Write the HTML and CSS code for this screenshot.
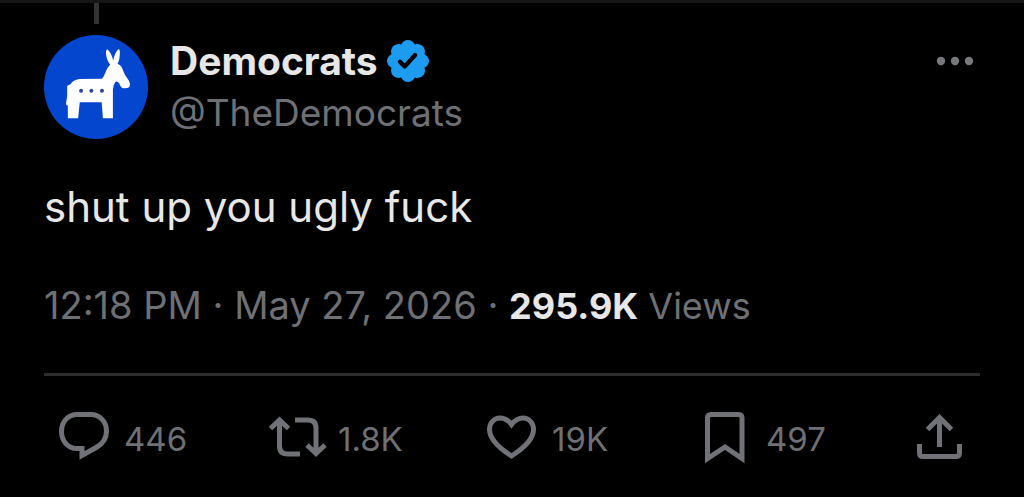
FILE: index.html
```html
<!DOCTYPE html>
<html lang="en">
<head>
<meta charset="utf-8">
<meta name="viewport" content="width=device-width, initial-scale=1">
<title>Post</title>
<link rel="stylesheet" href="styles.css">
</head>
<body>
<article class="post">
  <div class="thread"><span class="thread-line"></span></div>
  <header class="author">
    <svg class="avatar" viewBox="12 14 314 314" role="img" aria-label="Democrats avatar">
      <circle cx="169" cy="171" r="157" fill="#0546cf"/>
      <path fill="#fff" d="M84 265 L84 227 Q77 227 79 217 L82 199 L82 167 L92 163 Q100 150 118 147 L187 146 Q194 139 197 128 Q202 113 212 103 Q202 92 199 71 Q199 57 204 58 Q217 71 221 91 Q225 69 236 57 Q242 55 241 72 Q240 91 234 101 Q246 105 250 120 Q255 136 268 151 Q274 161 270 171 Q261 177 248 174 Q242 170 239 160 Q234 153 228 155 Q221 164 220 178 L220 265 L190 265 L186 217 L120 217 L115 265 Z"/>
      <g fill="#31439a"><circle cx="124" cy="182" r="6"/><circle cx="155" cy="182" r="6"/><circle cx="187" cy="182" r="6"/></g>
    </svg>
    <div class="names">
      <div class="name-row">
        <span class="name">Democrats</span>
        <svg class="badge" viewBox="1.6 1.6 18.8 18.8" role="img" aria-label="Verified">
          <path fill="#1d9bf0" d="M20.396 11c-.018-.646-.215-1.275-.57-1.816-.354-.54-.852-.972-1.438-1.246.223-.607.27-1.264.14-1.897-.131-.634-.437-1.218-.882-1.687-.47-.445-1.053-.75-1.687-.882-.633-.13-1.29-.083-1.897.14-.273-.587-.704-1.086-1.245-1.44S11.647 1.62 11 1.604c-.646.017-1.273.213-1.813.568s-.969.854-1.24 1.44c-.608-.223-1.267-.272-1.902-.14-.635.13-1.22.436-1.69.882-.445.47-.749 1.055-.878 1.688-.13.633-.08 1.29.144 1.896-.587.274-1.087.705-1.443 1.245-.356.54-.555 1.17-.574 1.817.02.647.218 1.276.574 1.817.356.54.856.972 1.443 1.245-.224.606-.274 1.263-.144 1.896.13.634.433 1.218.877 1.688.47.443 1.054.747 1.687.878.633.132 1.29.084 1.897-.136.274.586.705 1.084 1.246 1.439.54.354 1.17.551 1.816.569.647-.016 1.276-.213 1.817-.567s.972-.854 1.245-1.44c.604.239 1.266.296 1.903.164.636-.132 1.22-.447 1.68-.907.46-.46.776-1.044.908-1.681s.075-1.299-.165-1.903c.586-.274 1.084-.705 1.439-1.246.354-.54.551-1.17.569-1.816z"/>
          <path fill="none" stroke="#000" stroke-width="1.9" stroke-linecap="round" stroke-linejoin="round" d="M7.400 11.300 9.500 13.500 14.200 8.300"/>
        </svg>
      </div>
      <a class="handle" href="#profile">@TheDemocrats</a>
    </div>
    <button class="more" type="button" aria-label="More">
      <svg class="dots" viewBox="0 0 38 10"><circle cx="5" cy="5" r="4.2"/><circle cx="19" cy="5" r="4.2"/><circle cx="33" cy="5" r="4.2"/></svg>
    </button>
  </header>
  <p class="text">shut up you ugly fuck</p>
  <p class="meta"><time datetime="2026-05-27T12:18">12:18 PM · May 27, 2026</time> · <span class="views"><strong class="views-count">295.9K</strong> Views</span></p>
  <footer class="actions">
    <button class="action" type="button" aria-label="Reply, 446">
      <svg class="icon" viewBox="56 410 56 56"><path d="M77 414.5H91C100 414.5 106.500 422 106.500 431C106.500 438 103 443.500 97 447L82 455.500V448.500H77C68 448.500 61.500 441 61.500 431.500C61.500 422 68 414.500 77 414.500Z"/></svg>
      <span class="count">446</span>
    </button>
    <button class="action" type="button" aria-label="Repost, 1.8K">
      <svg class="icon" viewBox="270 410 56 56"><path d="M270.500 428.500 279.500 420 288.500 428.500M279.500 421V446Q279.500 454 287.500 454H300M295 420H308Q316 420 316 428V453M307 445 316 453.500 325 445"/></svg>
      <span class="count">1.8K</span>
    </button>
    <button class="action" type="button" aria-label="Like, 19K">
      <svg class="icon" viewBox="484 410 56 56"><path d="M511.500 456C499 448 489.500 439 489.500 429.500C489.500 422.500 494.500 418 500 418C505 418 508.500 420.500 511.500 424.500C514.500 420.500 518 418 523 418C528.500 418 533.500 422.500 533.500 429.500C533.500 439 524 448 511.500 456Z"/></svg>
      <span class="count">19K</span>
    </button>
    <button class="action" type="button" aria-label="Bookmark, 497">
      <svg class="icon" viewBox="698 410 56 56"><path d="M707.500 458.500V418Q707.500 414.500 711 414.500H738.500Q742 414.500 742 418V458.500L725 447Z"/></svg>
      <span class="count">497</span>
    </button>
    <button class="action" type="button" aria-label="Share">
      <svg class="icon" viewBox="912 410 56 56"><path d="M927.500 429.500 939.500 417.500 951.500 429.500M939.500 418V447M919.500 444V453Q919.500 456.500 923 456.500H956Q959.500 456.500 959.500 453V444"/></svg>
    </button>
  </footer>
</article>
</body>
</html>
```
FILE: styles.css
```css
* { box-sizing: border-box; }

body {
  margin: 0;
  background: #000;
  color: #e7e7e8;
  font-family: Inter, "Liberation Sans", sans-serif;
}

button {
  padding: 0;
  border: 0;
  background: none;
  color: inherit;
  font: inherit;
  cursor: pointer;
}

.post {
  padding: 0 44px 24px;
  border-top: 3px solid #161616;
}

.thread {
  display: flex;
  justify-content: center;
  width: 104px;
  height: 32px;
}

.thread-line {
  width: 5px;
  height: 21px;
  background: #333334;
}

.author {
  display: flex;
  align-items: flex-start;
}

.avatar {
  flex: none;
  width: 104px;
  height: 104px;
  margin-right: 22px;
}

.names {
  flex: 1;
  min-width: 0;
  line-height: 52px;
}

.name-row {
  display: flex;
  align-items: center;
  gap: 9px;
}

.name {
  font-size: 39px;
  font-weight: 700;
}

.badge {
  width: 42px;
  height: 42px;
}

.handle {
  display: block;
  color: #6e7074;
  font-size: 37px;
  text-decoration: none;
}

.more {
  display: flex;
  align-items: center;
  height: 52px;
  padding-right: 6px;
}

.dots {
  width: 38px;
  height: 10px;
  fill: #77797d;
}

.text {
  margin: 40px 0 0;
  font-size: 42px;
  line-height: 56px;
}

.meta {
  margin: 43px 0 0;
  padding-bottom: 40px;
  border-bottom: 3px solid #2d2d2e;
  color: #6e7074;
  font-size: 38px;
  line-height: 54px;
}

.views {
  font-size: 36px;
}

.views-count {
  color: #e7e7e8;
  font-weight: 700;
}

.actions {
  display: grid;
  grid-template-columns: repeat(4, 1fr) 56px;
  padding: 34px 12px 0;
}

.action {
  display: flex;
  align-items: center;
  gap: 12px;
  color: #6e7074;
  font-size: 33px;
  line-height: 52px;
}

.count {
  padding-top: 2px;
}

.icon {
  flex: none;
  width: 56px;
  height: 56px;
  overflow: visible;
  fill: none;
  stroke: #707277;
  stroke-width: 5;
}
```
